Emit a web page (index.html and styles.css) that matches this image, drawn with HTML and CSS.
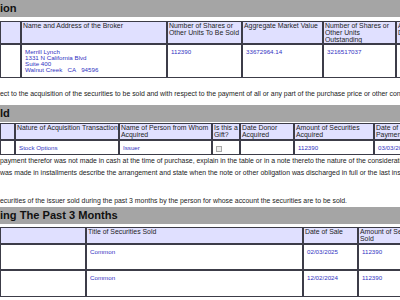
FILE: index.html
```html
<!DOCTYPE html>
<html>
<head>
<meta charset="utf-8">
<link rel="stylesheet" href="styles.css">
</head>
<body>
<div class="page">
  <h2 class="bar">ion</h2>
  <table class="grid grid-broker">
    <colgroup><col class="w21"><col class="w146"><col class="w75"><col class="w81"><col class="w73"><col class="w84"></colgroup>
    <tr class="head-row">
      <th></th>
      <th>Name and Address of the Broker</th>
      <th>Number of Shares or<br>Other Units To Be Sold</th>
      <th>Aggregate Market Value</th>
      <th>Number of Shares or<br>Other Units<br>Outstanding</th>
      <th>Approximate<br>Date of Sale</th>
    </tr>
    <tr class="row-broker">
      <td></td>
      <td>Merrill Lynch<br>1331 N California Blvd<br>Suite 400<br>Walnut Creek&nbsp;&nbsp;&nbsp;CA&nbsp;&nbsp;&nbsp;94596</td>
      <td>112390</td>
      <td>33672964.14</td>
      <td>3216517037</td>
      <td>02/03/2025</td>
    </tr>
  </table>
  <p class="note note-first">ect to the acquisition of the securities to be sold and with respect to the payment of all or any part of the purchase price or other consideration therefor:</p>

  <h2 class="bar">ld</h2>
  <table class="grid grid-acq">
    <colgroup><col class="w15"><col class="w104"><col class="w93"><col class="w28"><col class="w54"><col class="w80"><col class="w45"></colgroup>
    <tr class="head-row-2">
      <th></th>
      <th>Nature of Acquisition Transaction</th>
      <th>Name of Person from Whom<br>Acquired</th>
      <th>Is this a<br>Gift?</th>
      <th>Date Donor<br>Acquired</th>
      <th>Amount of Securities<br>Acquired</th>
      <th>Date of<br>Payment</th>
    </tr>
    <tr class="row-acq">
      <td></td>
      <td>Stock Options</td>
      <td>Issuer</td>
      <td><span class="check"></span></td>
      <td></td>
      <td>112390</td>
      <td>03/03/2025</td>
    </tr>
  </table>
  <p class="note">payment therefor was not made in cash at the time of purchase, explain in the table or in a note thereto the nature of the consideration given.<br>was made in installments describe the arrangement and state when the note or other obligation was discharged in full or the last installment paid.</p>
  <p class="note note-last">ecurities of the issuer sold during the past 3 months by the person for whose account the securities are to be sold.</p>

  <h2 class="bar">ing The Past 3 Months</h2>
  <table class="grid grid-sold">
    <colgroup><col class="w86"><col class="w217"><col class="w55"><col class="w80"></colgroup>
    <tr class="head-row-2">
      <th></th>
      <th>Title of Securities Sold</th>
      <th>Date of Sale</th>
      <th>Amount of Securities<br>Sold</th>
    </tr>
    <tr class="row-sold">
      <td></td>
      <td>Common</td>
      <td>02/03/2025</td>
      <td>112390</td>
    </tr>
    <tr class="row-sold-2">
      <td></td>
      <td>Common</td>
      <td>12/02/2024</td>
      <td>112390</td>
    </tr>
  </table>
</div>
</body>
</html>
```
FILE: styles.css
```css
* { box-sizing: border-box; }
html, body { margin: 0; padding: 0; }
body {
  width: 400px;
  height: 300px;
  overflow: hidden;
  background: #ffffff;
  font-family: "Liberation Sans", Arial, sans-serif;
  color: #1a1a1a;
}
.page { width: 400px; overflow: hidden; }

.bar {
  margin: 0;
  height: 17px;
  line-height: 17px;
  background: #a5a5a5;
  color: #111111;
  font-size: 11.1px;
  font-weight: bold;
  white-space: nowrap;
  overflow: hidden;
}

.grid {
  border-collapse: separate;
  border-spacing: 0;
  table-layout: fixed;
}
.grid th, .grid td {
  border: 1px solid #3c3c48;
  vertical-align: top;
  text-align: left;
  white-space: nowrap;
  overflow: hidden;
}
.grid th {
  background: #e0e0ff;
  color: #1e1e1e;
  font-weight: normal;
  font-size: 6.9px;
  line-height: 7px;
  padding: 0 1px;
}
.grid td {
  font-size: 6.2px;
  line-height: 6.33px;
  padding: 3.5px 3px 0 3px;
  color: #3232c2;
}

.grid-broker { width: 480px; margin-top: 4px; }
.grid-acq { width: 419px; margin-top: 1px; }
.grid-sold { width: 438px; margin-top: 3px; }

.w15 { width: 15px; } .w21 { width: 21px; } .w28 { width: 28px; }
.w45 { width: 45px; } .w54 { width: 54px; } .w55 { width: 55px; }
.w73 { width: 73px; } .w75 { width: 75px; } .w80 { width: 80px; }
.w81 { width: 81px; } .w84 { width: 84px; } .w86 { width: 86px; }
.w93 { width: 93px; } .w104 { width: 104px; } .w146 { width: 146px; }
.w217 { width: 217px; }

.head-row { height: 23px; }
.row-broker { height: 34px; }
.head-row-2 { height: 17px; }
.row-acq { height: 15px; }
.row-sold { height: 26px; }
.row-sold-2 { height: 27px; }

.check {
  display: block;
  width: 6px;
  height: 6px;
  border: 1px solid #a8a8a8;
  background: #ececec;
  margin-top: 1px;
}

.note {
  margin: 0;
  font-size: 6.9px;
  line-height: 11.5px;
  white-space: nowrap;
  color: #222222;
}
.note-first { margin: 10px 0 5.5px; }
.note-last { margin: 17px 0 0.5px; }
```
